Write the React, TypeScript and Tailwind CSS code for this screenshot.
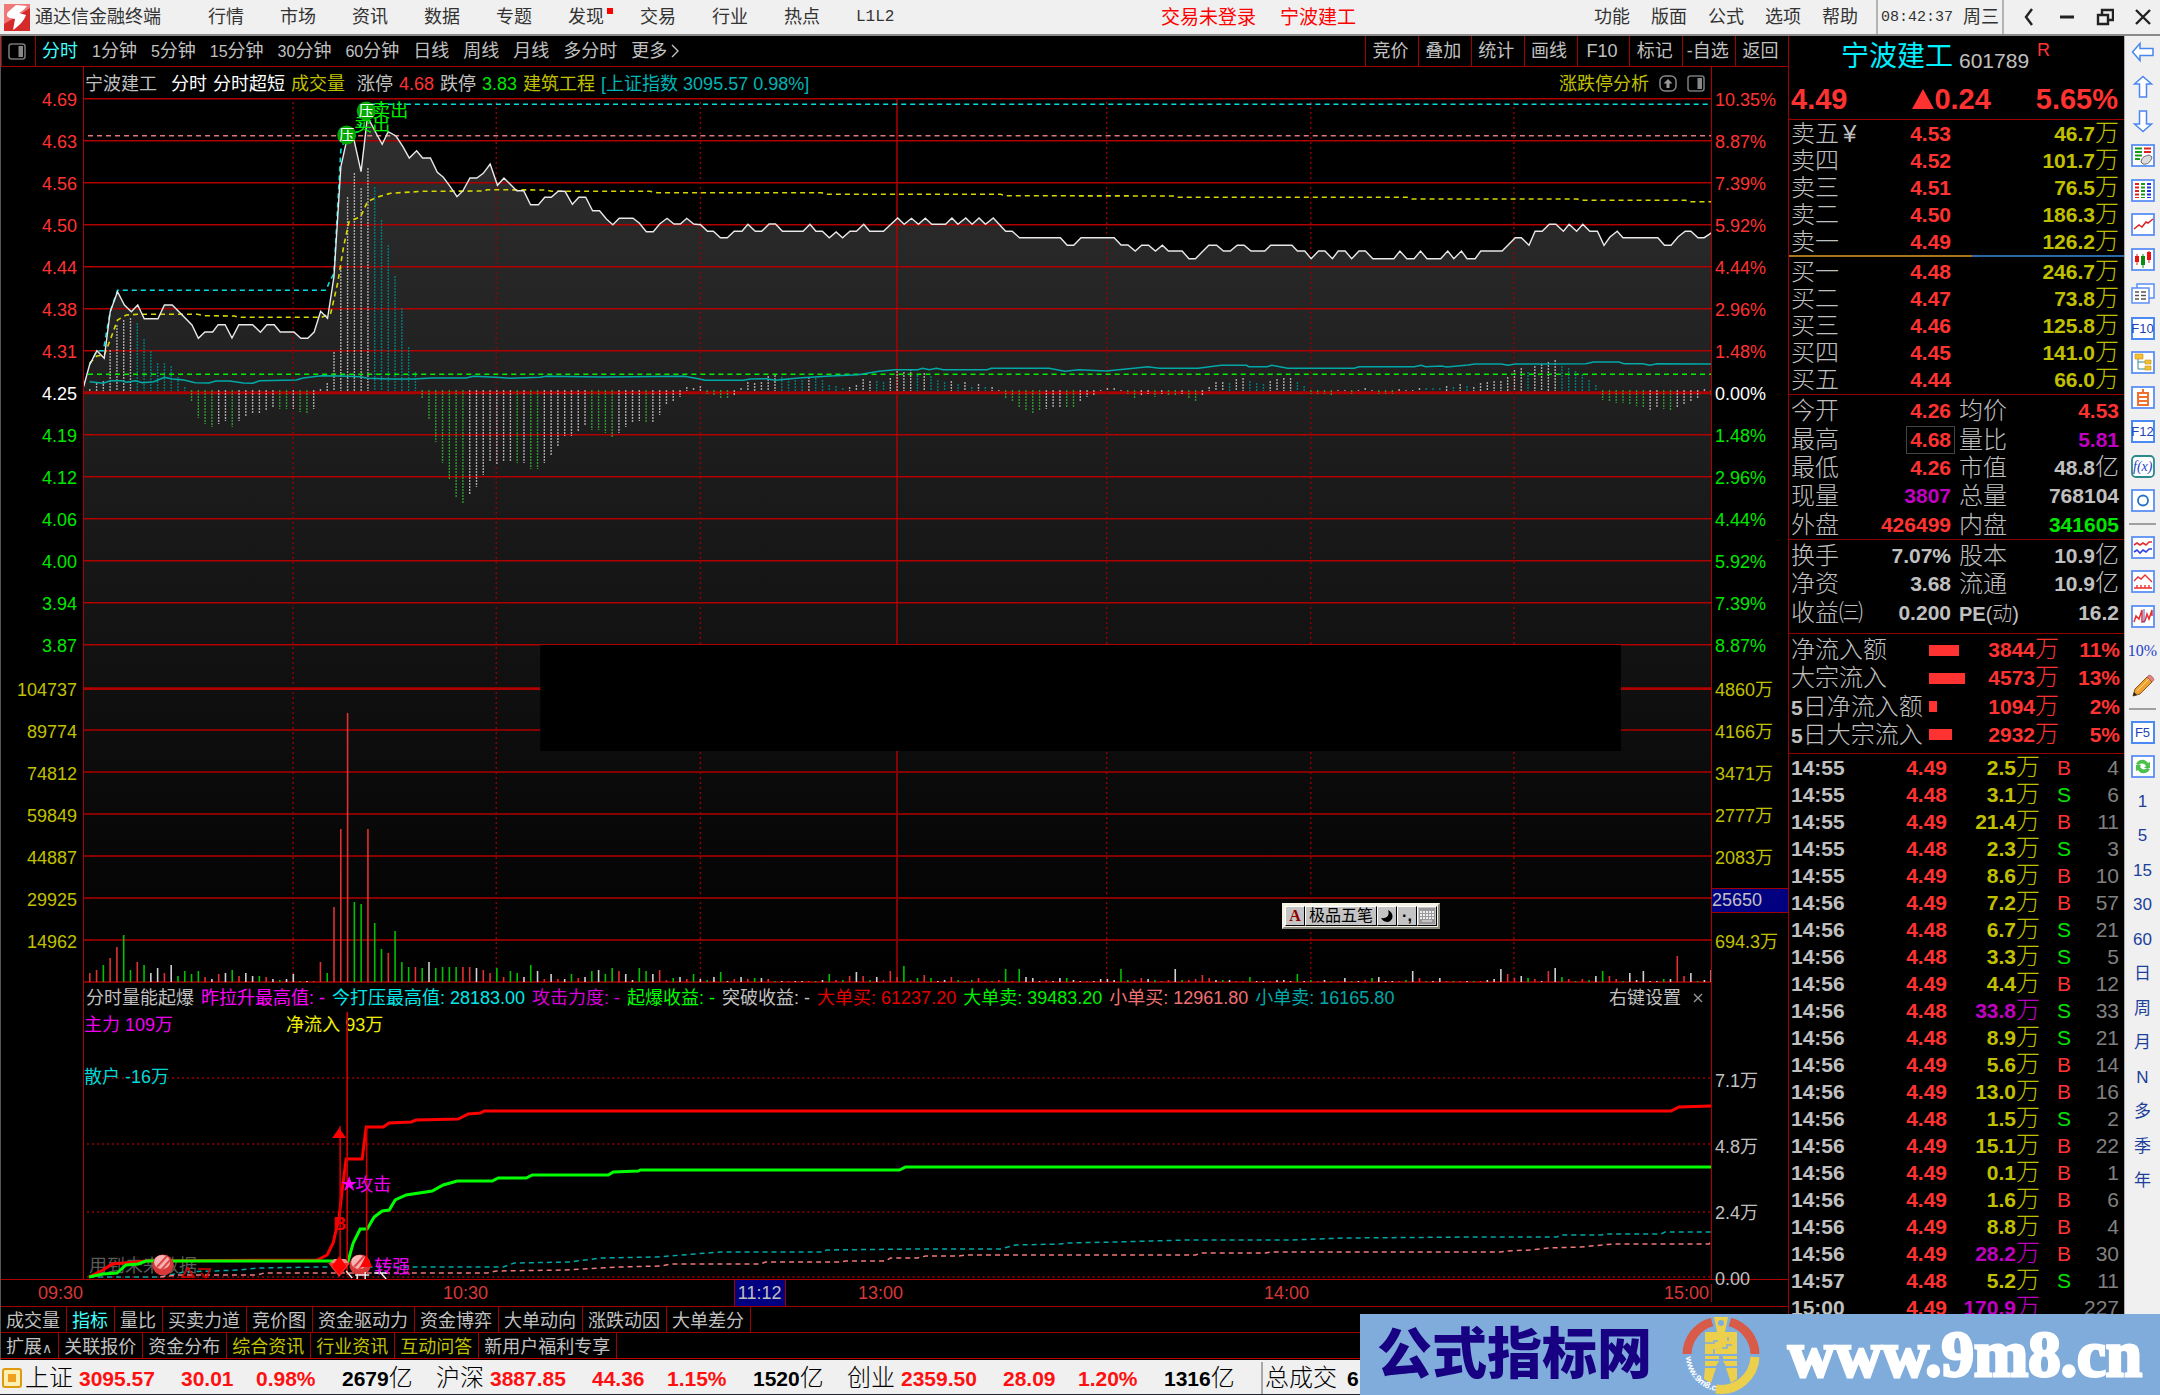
import React from "react";

const SANS = "font-['Liberation_Sans','Noto_Sans_CJK_SC',sans-serif]";

const RED = "text-[#ff3232]";
const GREEN = "text-[#00e600]";
const YELLOW = "text-[#c0c000]";
const GRAY = "text-[#c0c0c0]";
const PURPLE = "text-[#c000c0]";

/* ------------------------------------------------------------------ */
/* Chart data                                                          */
/* ------------------------------------------------------------------ */

type Block = { x: number; k: number; pts: string };

// Each block holds "x,y" samples relative to its own origin and density.
const toPoints = (blocks: Block[]) =>
  blocks
    .map(({ x, k, pts }) =>
      pts
        .trim()
        .split(/\s+/)
        .map((p) => {
          const [px, py] = p.split(",").map(Number);
          return `${(x + px / k).toFixed(1)},${(py / 3).toFixed(1)}`;
        })
        .join(" "),
    )
    .join(" ");

const A = 2.178;
const B = 2.119;

const PRICE = toPoints([
  {
    x: 0,
    k: A,
    pts: `182,1160 195,1095 211,1052 227,1075 240,935 256,875 271,915 286,935 300,915 314,956 344,956 358,915 375,915 418,975 432,1015 446,996 463,996 475,974 490,974 505,1014 520,974 550,974 567,997 581,974 597,974 610,996 640,996 655,1015 670,1015 684,996 698,934 713,955 727,830 742,500 755,420 770,415 786,515 800,350 815,390 832,433 845,395 862,408 877,440 891,474 907,452 920,474 937,474 952,517 965,532 980,560 995,590 1008,572 1023,534 1038,534 1052,520 1067,492 1083,556 1097,534 1125,572 1140,572 1155,614 1172,614 1186,592 1200,592 1215,574 1230,574 1246,613 1260,592 1275,592 1290,632 1305,632 1320,657 1334,674 1348,655 1378,655 1392,670 1407,695 1422,695 1436,672 1452,655 1467,672 1481,672 1495,655 1510,672 1525,674 1540,694 1553,694`,
  },
  {
    x: 720,
    k: A,
    pts: `0,713 15,713 30,694 47,694 60,673 76,694 90,694 106,672 120,672 135,694 180,694 195,673 208,694 222,694 237,713 252,696 266,713 282,694 296,694 312,673 325,694 355,694 370,674 386,654 400,673 416,655 431,673 446,655 460,673 490,673 504,654 517,673 534,654 548,673 563,654 577,673 594,654 621,694 635,694 651,713 740,713 755,736 769,736 785,713 857,713 872,735 887,735 903,753 917,736 932,736 947,753 962,736 975,753 1005,753 1020,776 1034,776 1063,736 1080,736 1095,753 1110,753 1125,736 1140,736 1155,753 1185,753 1198,736 1244,736 1256,753 1272,753 1286,776 1302,753 1316,753 1332,776 1345,753 1360,753 1374,776 1390,753 1404,753 1420,776 1466,776 1479,753 1494,776 1510,776 1524,753 1538,776`,
  },
  {
    x: 1420,
    k: B,
    pts: `42,776 57,753 70,776 86,753 98,776 115,776 127,753 172,753 200,713 213,713 229,736 242,694 257,694 272,673 286,673 302,694 314,673 330,694 343,673 358,694 374,694 388,736 400,712 416,694 428,713 502,713 516,736 530,736 545,710 560,694 572,694 587,713 600,713 617,697`,
  },
]);

const AVERAGE = toPoints([
  {
    x: 0,
    k: A,
    pts: `195,1090 211,1068 227,1065 240,1020 256,960 275,945 300,943 430,943 445,947 510,948 520,952 700,952 720,940 735,850 748,740 760,665 785,650 800,605 820,592 850,580 920,574 1055,573 1060,569 1190,570 1200,574 1415,574 1430,578`,
  },
  { x: 720, k: A, pts: `220,578 230,583 610,583 620,587 985,588 995,592 1495,592 1505,597` },
  { x: 1420, k: B, pts: `330,597 345,601 560,601 572,605 617,605` },
]);

const HIGHEST = toPoints([
  {
    x: 0,
    k: A,
    pts: `195,1095 211,1052 225,1052 240,935 256,871 710,871 716,850 727,820 742,450 755,404 780,395 800,313`,
  },
  { x: 1420, k: B, pts: `617,313` },
]);

const INDEX = toPoints([
  {
    x: 0,
    k: A,
    pts: `195,1145 225,1150 240,1142 265,1142 275,1147 295,1142 310,1148 335,1145 358,1132 375,1137 400,1140 425,1148 455,1149 470,1143 500,1143 530,1149 550,1150 565,1142 645,1140 660,1134 700,1127 740,1128 785,1130 800,1135 850,1137 900,1137 940,1134 1015,1134 1030,1129 1080,1132 1110,1135 1175,1132 1190,1129 1310,1131 1490,1129 1520,1136 1535,1141`,
  },
  {
    x: 720,
    k: A,
    pts: `50,1141 65,1137 100,1136 120,1141 170,1134 240,1128 300,1124 345,1114 380,1109 430,1109 440,1105 455,1109 470,1105 485,1109 580,1109 590,1105 715,1105 750,1114 780,1109 840,1113 900,1105 930,1100 955,1105 1040,1105 1090,1096 1145,1096 1150,1100 1190,1100 1200,1096 1235,1105 1380,1105 1390,1100 1510,1100 1525,1096 1535,1100`,
  },
  {
    x: 1420,
    k: B,
    pts: `44,1098 55,1101 100,1095 115,1092 170,1092 185,1096 200,1092 350,1091 365,1086 420,1086 430,1091 470,1091 485,1096 500,1091 617,1092`,
  },
]);

// One token per minute: signed length and colour key.
const MACD =
  "2w 8w 10w 41w 66w 71w 73w 68t 52t 40t 28t 28t 25t 14t 4t -8g -25g -31g -34g -31w -28w -34g -28w -24w -21w -21w -18w -14w -16g -16g -16w -19g -21g -16w 2w 8w 39w 124w 194w 218w 203w 223w 204t 171t 146t 115t 83t 44t 19t -5g -27g -49g -70g -87g -105g -111g -101w -94w -82w -69w -71w -69w -69w -70g -70w -76g -76g -70w -63w -53w -43w -43w -39w -33w -37g -37g -40g -45g -40w -34w -30w -28w -30g -30w -22w -12w -8w -4w 4w 3w 5w -1g -2g -5g -5g -2w 3w 9w 8w 9w 15w 16w 14t 13t 11t 11t 14w 13t 11t 6t 5t 3t 4w 6w 12w 10w 10t 9t 13w 20w 19w 22w 16t 18w 15t 11t 9t 10w 7t 9w 4t 7w 4t 4w 1w -5g -9g -14g -18g -20g -18g -16w -14w -14w -14g -14g -9w -4w -2w 1w 3w 3w 1w -1g -5g -2w -1w -4g -1w -3g -3g -1w -5g -8g -3w 4w 9w 9w 8t 12w 13w 10t 8t 7t 10w 12w 13w 13w 9t 5t -1g -1g -1g -3g 1w 1w -1g 1w 3w 1w -1g -1g -1g 2w 1w 1w 3w 3t 3t 3t 5w 4t 7w 5t 4w 8w 9w 10w 10w 14w 21w 23w 19t 25w 27w 29w 31w 25t 23t 20t 17t 11t 6t -7g -8g -10g -10g -12g -13g -14g -17w -15w -16g -17g -14w -12w -8w -5w 2w -3g";

const VOLUME =
  "9r 12r 17g 24r 35r 47g 12g 20r 17g 9w 14w 9r 17w 6g 11g 8g 11g 5r 3w 8r 9w 12g 6r 9w 6w 6g 5r 3w 2g 3w 8w 1g 1w 1r 20r 9g 75r 153r 269r 80g 78g 153r 59g 33g 29r 51g 20g 15g 15r 14g 20w 14g 15g 15g 15g 15r 15r 14w 12r 9r 14g 5r 11g 9g 5w 17g 11w 3r 8w 3r 3w 8g 4r 5w 11g 12w 8g 14g 11r 8w 2w 14g 11g 8w 12r 2r 4g 5w 3r 8g 3w 2g 5w 10g 1w 3r 5w 3r 4g 4w 3r 1g 1w 1r 1w 1w 1r 1g 2w 8g 2r 2g 6r 10w 6r 2g 5w 2r 11r 5r 16g 2r 4g 7r 4g 1w 2w 5r 2g 1g 2g 4r 1r 1g 2r 13g 1r 13g 5w 4w 1w 2r 1w 4w 4g 2w 1w 1r 1w 3w 3w 2w 13g 2g 2r 4r 3w 2g 1r 2r 13w 2g 2r 3r 7r 4r 2w 2g 2w 1r 1r 5g 1w 1w 1r 2w 2w 1w 8g 1w 2g 1r 2w 1g 1r 4w 1g 1w 2r 4g 5w 1w 1w 1r 2g 11w 4r 1g 1w 4w 1r 1g 1r 1w 1g 1r 2w 3w 13w 8r 4r 6w 4g 3r 1w 11r 14w 5g 3r 1g 3r 2g 6w 11g 6r 3r 1g 9w 2w 11w 1w 1w 3g 3w 26r 6r 9w 1g 2w 12w";

const parseBars = (s: string) =>
  s.split(" ").map((t, i) => ({
    x: 83 + 6.78 * (i + 1),
    h: parseInt(t, 10),
    c: t.slice(-1),
  }));

const MACD_COLORS: Record<string, string> = { w: "#a8a8a8", g: "#2f9a2f", t: "#007c7c" };
const VOL_COLORS: Record<string, string> = { w: "#d0d0d0", g: "#00c000", r: "#e03030" };

const V_GRID = [293, 496, 700, 1106, 1310, 1513];

/* ------------------------------------------------------------------ */
/* Small pieces                                                        */
/* ------------------------------------------------------------------ */

function Value({ text, unit, className }: { text: string; unit?: string; className: string }) {
  return (
    <span className={`block whitespace-nowrap text-[21px] font-bold leading-[26px] ${className}`}>
      {text}
      {unit && <span className="text-2xl font-light leading-none">{unit}</span>}
    </span>
  );
}

function SplitIcon({ className }: { className: string }) {
  return (
    <svg className={className} viewBox="0 0 18 17">
      <rect x="1" y="1" width="16" height="15" rx="2.5" fill="none" stroke="#777" strokeWidth="1.6" />
      <rect x="10.5" y="3" width="4.5" height="11" fill="#888" />
    </svg>
  );
}

/* ------------------------------------------------------------------ */
/* Top bar                                                             */
/* ------------------------------------------------------------------ */

const MENU = ["行情", "市场", "资讯", "数据", "专题", "发现", "交易", "行业", "热点"];
const RIGHT_MENU = ["功能", "版面", "公式", "选项", "帮助"];

function TopBar() {
  return (
    <header className="flex h-9 items-center border-b-2 border-[#8a8a8a] bg-[#f0f0f0] text-lg leading-none text-[#333]">
      <svg className="ml-1 h-[27px] w-[26px]" viewBox="0 0 26 27">
        <rect width="26" height="27" fill="#d42a2a" />
        <path d="M0 0h26v4L10 14 0 20z" fill="#f07878" />
        <path d="M12 1 4 8c-2 3-1 5 2 6l5 1-2 11c6-4 11-9 13-15l-7-2c3-2 6-4 8-7z" fill="#fff" />
      </svg>
      <h1 className="ml-[5px] w-[173px] text-lg">通达信金融终端</h1>
      <nav className="flex gap-9">
        {MENU.map((m) => (
          <button key={m} className="relative">
            {m}
            {m === "发现" && <span className="absolute -right-[9px] top-0 h-1.5 w-1.5 bg-[#ff0000]" />}
          </button>
        ))}
        <button className="font-['Liberation_Mono',monospace] text-base leading-none">L1L2</button>
      </nav>
      <div className="flex flex-1 justify-end gap-6 pr-[238px] text-[19px] text-[#ff0000]">
        <button>交易未登录</button>
        <button>宁波建工</button>
      </div>
      <nav className="flex gap-[21px]">
        {RIGHT_MENU.map((m) => (
          <button key={m}>{m}</button>
        ))}
      </nav>
      <div className="ml-[18px] flex h-full items-center gap-2.5 border-x-2 border-[#b4b4b4] px-[3px]">
        <time className="font-['Liberation_Mono',monospace] text-[15px]">08:42:37</time>
        <span>周三</span>
      </div>
      <div className="ml-4 flex items-center gap-5 pr-2">
        <button aria-label="后退">
          <svg className="h-5 w-[18px]" viewBox="0 0 18 20">
            <path d="M12 2 6 10l6 8" fill="none" stroke="#222" strokeWidth="2.4" />
          </svg>
        </button>
        <button aria-label="最小化">
          <svg className="h-5 w-[18px]" viewBox="0 0 18 20">
            <path d="M2 10h14" stroke="#222" strokeWidth="3" />
          </svg>
        </button>
        <button aria-label="还原">
          <svg className="h-5 w-[18px]" viewBox="0 0 18 20" fill="none" stroke="#222" strokeWidth="2.4">
            <path d="M2 8h10v9H2zM6 7V3h11v10h-4" />
          </svg>
        </button>
        <button aria-label="关闭">
          <svg className="h-5 w-[18px]" viewBox="0 0 18 20">
            <path d="m2 3 14 14M16 3 2 17" stroke="#222" strokeWidth="2.4" />
          </svg>
        </button>
      </div>
    </header>
  );
}

/* ------------------------------------------------------------------ */
/* Period toolbar                                                      */
/* ------------------------------------------------------------------ */

const PERIODS: [string, string][] = [
  ["", "分时"],
  ["1", "分钟"],
  ["5", "分钟"],
  ["15", "分钟"],
  ["30", "分钟"],
  ["60", "分钟"],
  ["", "日线"],
  ["", "周线"],
  ["", "月线"],
  ["", "多分时"],
];
const TOOLS = ["竞价", "叠加", "统计", "画线", "F10", "标记", "-自选", "返回"];

function PeriodBar() {
  return (
    <div className={`flex h-[31px] items-stretch border-b border-[#a00000] text-lg leading-none ${GRAY}`}>
      <button aria-label="侧栏" className="flex w-[35px] items-center justify-center border-x border-[#a00000] pr-1">
        <SplitIcon className="h-[17px] w-[18px]" />
      </button>
      <div className="flex items-center gap-3.5 pl-1.5">
        {PERIODS.map(([n, label], i) => (
          <button key={n + label} className={i === 0 ? "text-[#40ffff]" : ""}>
            <span className="text-base leading-none">{n}</span>
            {label}
          </button>
        ))}
        <button className="flex items-center gap-1">
          更多
          <svg className="h-4 w-2" viewBox="0 0 8 16">
            <path d="m1 2 6 6-6 6" fill="none" stroke="#c0c0c0" strokeWidth="1.4" />
          </svg>
        </button>
      </div>
      <div className="ml-auto grid w-[423px] grid-cols-8">
        {TOOLS.map((t) => (
          <button key={t} className="whitespace-nowrap border-l border-[#a00000] pr-[3px]">
            {t}
          </button>
        ))}
      </div>
    </div>
  );
}

/* ------------------------------------------------------------------ */
/* Price and volume chart                                              */
/* ------------------------------------------------------------------ */

const UP = ["4.69", "4.63", "4.56", "4.50", "4.44", "4.38", "4.31"];
const DOWN = ["4.19", "4.12", "4.06", "4.00", "3.94", "3.87"];
const UP_PCT = ["10.35%", "8.87%", "7.39%", "5.92%", "4.44%", "2.96%", "1.48%"];
const DOWN_PCT = ["1.48%", "2.96%", "4.44%", "5.92%", "7.39%", "8.87%"];
const VOLS = ["104737", "89774", "74812", "59849", "44887", "29925", "14962"];
const AMOUNTS = ["4860万", "4166万", "3471万", "2777万", "2083万", "", "694.3万"];

function AxisCells({ items, color }: { items: string[]; color: string }) {
  return (
    <>
      {items.map((t, i) => (
        <div key={i} className={`flex h-[42px] items-center ${color}`}>
          {t}
        </div>
      ))}
    </>
  );
}

function PriceSvg() {
  const macd = parseBars(MACD);
  const volume = parseBars(VOLUME);
  return (
    <svg className="block h-[885px] w-full" viewBox="84 98 1626 885" preserveAspectRatio="none">
      <defs>
        <linearGradient id="area" gradientUnits="userSpaceOnUse" x1="0" y1="110" x2="0" y2="983">
          <stop offset="0" stopColor="#2f2f2f" />
          <stop offset="1" stopColor="#000" />
        </linearGradient>
      </defs>
      <polygon points={`${PRICE} 1711,983 83,983`} fill="url(#area)" />
      <g stroke="#b00000" strokeWidth="1.5">
        {Array.from({ length: 14 }, (_, i) => (
          <line key={i} x1="83" x2="1711" y1={98.8 + 42 * i} y2={98.8 + 42 * i} strokeWidth={i === 7 ? 3 : 1.5} />
        ))}
        <line x1="83" x2="1711" y1="688.6" y2="688.6" strokeWidth="2.6" />
        <line x1="896.5" x2="896.5" y1="98" y2="982" />
        <line x1="83" x2="1711" y1="982" y2="982" />
      </g>
      <g stroke="#860000" strokeWidth="2">
        {Array.from({ length: 6 }, (_, i) => (
          <line key={i} x1="83" x2="1711" y1={730 + 42 * i} y2={730 + 42 * i} />
        ))}
      </g>
      <g stroke="#960000" strokeWidth="1.4" strokeDasharray="2 3">
        {V_GRID.map((x) => (
          <line key={x} x1={x} x2={x} y1="102" y2="982" />
        ))}
      </g>
      <g strokeWidth="1.4" strokeDasharray="2 1">
        {macd.map((b) => (
          <line
            key={b.x}
            x1={b.x}
            x2={b.x}
            y1={b.h > 0 ? 391 - b.h : 390}
            y2={b.h > 0 ? 391 : 393 - b.h}
            stroke={MACD_COLORS[b.c]}
          />
        ))}
      </g>
      <g strokeWidth="1.6">
        {volume.map((b) => (
          <line key={b.x} x1={b.x} x2={b.x} y1={982 - b.h} y2="982" stroke={VOL_COLORS[b.c]} />
        ))}
      </g>
      <g fill="none" strokeWidth="1.6">
        <line x1="88" x2="1711" y1="135.7" y2="135.7" stroke="#e07878" strokeDasharray="5 4" />
        <polyline points={HIGHEST} stroke="#00e0e0" strokeDasharray="5 4" />
        <polyline points={AVERAGE} stroke="#d8d800" strokeDasharray="5 4" />
        <line x1="88" x2="1711" y1="374.3" y2="374.3" stroke="#00f000" strokeDasharray="5 4" />
        <polyline points={INDEX} stroke="#00a8a8" />
        <polyline points={PRICE} stroke="#e8e8e8" strokeWidth="1.4" />
      </g>
      <g className={SANS} fontSize="18">
        <g fill="#00f000">
          <text x="354" y="131">卖出</text>
          <text x="372" y="117">卖出</text>
        </g>
        <circle cx="346.5" cy="135" r="9.5" fill="#00a800" />
        <circle cx="366" cy="111" r="9.5" fill="#00a800" />
        <g fill="#fff" fontSize="15">
          <text x="339" y="140">压</text>
          <text x="358.5" y="116">压</text>
        </g>
      </g>
      <rect x="540" y="645" width="1080" height="106" fill="#000" />
    </svg>
  );
}

function PriceSection() {
  return (
    <section className="flex text-lg leading-none">
      <div className="flex w-[82px] flex-col items-end pr-1.5 pt-3">
        <AxisCells items={UP} color={RED} />
        <AxisCells items={["4.25"]} color="text-white" />
        <AxisCells items={DOWN} color={GREEN} />
        <div className="mt-0.5">
          <AxisCells items={VOLS} color={`${YELLOW} justify-end`} />
        </div>
      </div>
      <div className="min-w-0 flex-1 border-x border-[#b00000]">
        <div className={`flex h-[31px] items-center gap-1.5 whitespace-nowrap pl-px pt-0.5 ${GRAY}`}>
          <span>宁波建工</span>
          <span className="ml-2 text-white">分时</span>
          <span className="text-white">分时超短</span>
          <span className={YELLOW}>成交量</span>
          <span className="ml-1.5">涨停</span>
          <span className={RED}>4.68</span>
          <span>跌停</span>
          <span className={GREEN}>3.83</span>
          <span className={YELLOW}>建筑工程</span>
          <span className="text-[#00b4b4]">[上证指数 3095.57 0.98%]</span>
          <div className="ml-auto flex items-center gap-2.5 pr-1.5">
            <button className={YELLOW}>涨跌停分析</button>
            <button aria-label="上移">
              <svg className="h-[17px] w-[18px]" viewBox="0 0 18 17">
                <rect x="1" y="1" width="16" height="15" rx="5" fill="none" stroke="#888" strokeWidth="1.5" />
                <path d="M9 4 4.500 8.500H7.500V13h3V8.500h3z" fill="#999" />
              </svg>
            </button>
            <button aria-label="分栏">
              <SplitIcon className="h-[17px] w-[18px]" />
            </button>
          </div>
        </div>
        <PriceSvg />
      </div>
      <div className="w-[76px] pt-3">
        <div className="pl-[3px]">
          <AxisCells items={UP_PCT} color={RED} />
          <AxisCells items={["0.00%"]} color="text-white" />
          <AxisCells items={DOWN_PCT} color={GREEN} />
        </div>
        <div className="mt-0.5">
          {AMOUNTS.map((a, i) =>
            a ? (
              <div key={i} className={`flex h-[42px] items-center pl-[3px] ${YELLOW}`}>
                {a}
              </div>
            ) : (
              <div key={i} className="flex h-[42px] items-center">
                <span className={`flex h-[25px] w-full items-center border-y border-[#a00000] bg-[#000080] ${GRAY}`}>
                  25650
                </span>
              </div>
            ),
          )}
        </div>
      </div>
    </section>
  );
}

/* ------------------------------------------------------------------ */
/* Indicator chart                                                     */
/* ------------------------------------------------------------------ */

const IND: [string, string][] = [
  ["分时量能起爆", "text-[#c0c0c0]"],
  ["昨拉升最高值: -", "text-[#ff00ff]"],
  ["今打压最高值: 28183.00", "text-[#00e8e8]"],
  ["攻击力度: -", "text-[#d800d8]"],
  ["起爆收益: -", "text-[#00ff00]"],
  ["突破收益: -", "text-[#c0c0c0]"],
  ["大单买: 61237.20", "text-[#e00000]"],
  ["大单卖: 39483.20", "text-[#00f000]"],
  ["小单买: 12961.80", "text-[#f07070]"],
  ["小单卖: 16165.80", "text-[#00a8a8]"],
];

function Balloon({ cx }: { cx: number }) {
  return (
    <g>
      <ellipse cx={cx} cy="1265" rx="10.500" ry="10.500" fill="#d83838" />
      <ellipse cx={cx - 1} cy="1262" rx="8" ry="7" fill="#f6b4b4" />
      <path
        d={`M${cx - 6} 1267 L${cx + 4} 1256 M${cx - 2} 1270 L${cx + 7} 1260`}
        stroke="#e04848"
        strokeWidth="2"
      />
    </g>
  );
}

function IndicatorSvg() {
  return (
    <svg className="block h-[269px] w-full" viewBox="84 1010 1626 269" preserveAspectRatio="none">
      <g stroke="#960000" strokeWidth="1.400" strokeDasharray="2 3">
        {[1078, 1144, 1212, 1277].map((y) => (
          <line key={y} x1="87" x2="1711" y1={y} y2={y} />
        ))}
      </g>
      <g className={SANS} fontSize="18">
        <text x="84" y="1031" fill="#f000f0">主力 109万</text>
        <text x="286" y="1031" fill="#f0f000">净流入 93万</text>
        <text x="84" y="1083" fill="#00d8d8">散户 -16万</text>
        <text x="89" y="1272" fill="#5a5a5a">用到未来数据</text>
      </g>
      <g fill="none" strokeWidth="1.500" strokeDasharray="5 4">
        <polyline
          stroke="#00a8a8"
          points="89,1277 160,1277 184,1272 239,1270 257,1268 321,1267 503,1267 514,1263 569,1262 601,1258 657,1257 707,1253 720,1252 823,1252 826,1250 914,1249 1000,1249 1015,1245 1060,1244 1066,1243 1115,1242 1187,1240 1290,1240 1345,1238 1475,1237 1556,1237 1560,1235 1600,1235 1604,1234 1660,1234 1664,1232 1711,1232"
        />
        <polyline
          stroke="#f07878"
          points="160,1277 179,1275 257,1275 264,1273 487,1273 496,1271 565,1270 618,1267 661,1266 670,1264 760,1264 765,1262 840,1262 845,1261 885,1261 890,1258 917,1258 925,1256 958,1256 965,1255 1195,1255 1200,1253 1265,1253 1270,1252 1500,1252 1505,1251 1530,1250 1547,1248 1580,1247 1612,1244 1708,1244 1711,1241"
        />
      </g>
      <g fill="none" strokeWidth="3">
        <polyline
          stroke="#ff0000"
          points="89,1277 103,1270 112,1264 124,1263 146,1261 317,1260 327,1255 333,1243 339,1217 342,1190 346,1159 362,1159 366,1127 383,1127 389,1123 411,1122 416,1120 458,1119 468,1114 480,1113 484,1111 1670,1111 1678,1107 1711,1106"
        />
        <polyline
          stroke="#00ff00"
          points="89,1277 103,1274 117,1273 126,1265 138,1264 146,1261 348,1261 353,1243 360,1229 367,1229 374,1217 382,1211 389,1210 395,1200 406,1195 432,1191 443,1185 457,1181 492,1181 498,1178 526,1178 532,1175 608,1175 613,1172 638,1171 640,1170 899,1170 905,1167 1711,1167"
        />
      </g>
      <g stroke="#d00000" strokeWidth="1.600">
        <line x1="347" x2="347" y1="1012" y2="1275" />
        <line x1="340" x2="340" y1="1126" y2="1275" />
        <line x1="366.500" x2="366.500" y1="1127" y2="1262" />
      </g>
      <path d="m339 1128-7 10h14z" fill="#ff0000" />
      <path d="M328 1263h22l-11 14z" fill="#f03030" />
      <path d="m330 1263 4-4h11l4 4z" fill="#e88" />
      <Balloon cx={163} />
      <Balloon cx={360} />
      <path d="m339 1256-7 10 7 9 7-9zM366 1255l-6 12h12z" fill="#ff0000" />
      <path
        d="m188 1268-6 9h12zM198 1269h12l-4 9M201 1273l5 5"
        fill="none"
        stroke="#e00000"
        strokeWidth="1.600"
      />
      <path d="m346 1271 6 7M355 1275h14M357 1275v4M365 1272v7M374 1273h13M378 1270l8 9" stroke="#f0f0f0" strokeWidth="1.500" fill="none" />
      <g className={SANS} fontSize="18">
        <text x="333" y="1230" fill="#f00000" fontWeight="bold">B</text>
        <path d="m349 1176 2 6h6l-5 3 2 6-5-4-5 4 2-6-5-3h6z" fill="#ff00ff" />
        <text x="355" y="1191" fill="#f000f0">攻击</text>
        <text x="374" y="1273" fill="#f000f0">转强</text>
      </g>
    </svg>
  );
}

function IndicatorSection() {
  return (
    <section className="flex text-lg leading-none">
      <div className="w-[82px]" />
      <div className="min-w-0 flex-1 border-x border-[#b00000]">
        <div className="flex h-[27px] items-center gap-[7px] whitespace-nowrap pl-0.5 pt-0.5">
          {IND.map(([t, c]) => (
            <span key={t} className={c}>
              {t}
            </span>
          ))}
          <button className={`ml-auto ${GRAY}`}>右键设置</button>
          <button aria-label="关闭指标" className="pl-1 pr-[7px]">
            <svg className="h-3 w-3" viewBox="0 0 12 12">
              <path d="m2 2 8 8M10 2l-8 8" stroke="#999" strokeWidth="1.300" />
            </svg>
          </button>
        </div>
        <IndicatorSvg />
      </div>
      <div className={`relative z-10 -mb-9 w-[76px] pl-[3px] pt-[65px] ${GRAY}`}>
        {["7.1万", "4.8万", "2.4万", "0.00"].map((t) => (
          <div key={t} className="flex h-[66px] items-center">
            {t}
          </div>
        ))}
      </div>
    </section>
  );
}

function TimeAxis() {
  return (
    <div className="relative flex h-[27px] items-center border-t border-[#b00000] text-lg leading-none text-[#d83838]">
      <span className="w-[82px] text-right">09:30</span>
      <div className="grid flex-1 grid-cols-[405fr_415fr_406fr_402fr] border-r border-[#b00000] text-right">
        <span>10:30</span>
        <span>13:00</span>
        <span>14:00</span>
        <span className="pr-0.5">15:00</span>
      </div>
      <span className="w-[76px]" />
      <span className={`absolute inset-y-0 left-[41%] flex w-[52px] items-center justify-center border-x border-[#a00000] bg-[#000080] ${GRAY}`}>
        11:12
      </span>
    </div>
  );
}

const TABS1 = ["成交量", "指标", "量比", "买卖力道", "竞价图", "资金驱动力", "资金博弈", "大单动向", "涨跌动因", "大单差分"];
const TABS2 = ["扩展", "关联报价", "资金分布", "综合资讯", "行业资讯", "互动问答", "新用户福利专享"];

function TabRow({ tabs, colors }: { tabs: string[]; colors: Record<string, string> }) {
  return (
    <div className="flex h-[26px] border-t border-[#a00000] text-lg leading-none">
      {tabs.map((t) => (
        <button key={t} className={`whitespace-nowrap border-r border-[#a00000] pl-[5px] pr-1.5 pt-0.5 ${colors[t] ?? GRAY}`}>
          {t}
          {t === "扩展" && (
            <span aria-hidden="true" className="font-['DejaVu_Sans',sans-serif] text-sm leading-none">
              ∧
            </span>
          )}
        </button>
      ))}
    </div>
  );
}

/* ------------------------------------------------------------------ */
/* Quote panel                                                         */
/* ------------------------------------------------------------------ */

const SELL = [
  ["卖五", "4.53", "46.7"],
  ["卖四", "4.52", "101.7"],
  ["卖三", "4.51", "76.5"],
  ["卖二", "4.50", "186.3"],
  ["卖一", "4.49", "126.2"],
];
const BUY = [
  ["买一", "4.48", "246.7"],
  ["买二", "4.47", "73.8"],
  ["买三", "4.46", "125.8"],
  ["买四", "4.45", "141.0"],
  ["买五", "4.44", "66.0"],
];

function Book({ rows, yuan }: { rows: string[][]; yuan?: boolean }) {
  return (
    <table className="w-full table-fixed">
      <colgroup>
        <col className="w-[82px]" />
        <col className="w-[80px]" />
        <col />
      </colgroup>
      <tbody>
        {rows.map(([label, price, vol], i) => (
          <tr key={label} className="h-[27px]">
            <th scope="row" className={`whitespace-nowrap p-0 pl-0.5 text-left text-2xl font-light leading-[26px] ${GRAY}`}>
              {label}
              {yuan && i === 0 && <span className="pl-1 leading-none">¥</span>}
            </th>
            <td className="p-0 text-right">
              <Value text={price} className={RED} />
            </td>
            <td className="p-0 pr-[5px] text-right">
              <Value text={vol} unit="万" className={YELLOW} />
            </td>
          </tr>
        ))}
      </tbody>
    </table>
  );
}

type Stat = [string, string, string, string, string, string, string];
const STATS1: Stat[] = [
  ["今开", "4.26", RED, "均价", "4.53", "", RED],
  ["最高", "4.68", RED, "量比", "5.81", "", PURPLE],
  ["最低", "4.26", RED, "市值", "48.8", "亿", GRAY],
  ["现量", "3807", PURPLE, "总量", "768104", "", GRAY],
  ["外盘", "426499", RED, "内盘", "341605", "", GREEN],
];
const STATS2: Stat[] = [
  ["换手", "7.07%", GRAY, "股本", "10.9", "亿", GRAY],
  ["净资", "3.68", GRAY, "流通", "10.9", "亿", GRAY],
  ["收益㈢", "0.200", GRAY, "PE(动)", "16.2", "", GRAY],
];

function Stats({ rows }: { rows: Stat[] }) {
  return (
    <>
      {rows.map(([l1, v1, c1, l2, v2, u2, c2]) => (
        <div key={l1} className="flex flex-1 items-center">
          <span className={`w-[75px] whitespace-nowrap pl-0.5 text-2xl font-light leading-[26px] ${GRAY}`}>{l1}</span>
          <span className="flex w-[91px] justify-end">
            <span className={v1 === "4.68" ? "-my-px border border-[#444] px-[3px]" : "px-1"}>
              <Value text={v1} className={c1} />
            </span>
          </span>
          <span className={`whitespace-nowrap pl-1 text-2xl font-light leading-[26px] ${GRAY}`}>
            {l2 === "PE(动)" ? (
              <>
                <span className="text-xl font-bold leading-none">PE</span>
                <span className="text-xl leading-none">(动)</span>
              </>
            ) : (
              l2
            )}
          </span>
          <span className="flex-1 pr-[5px] text-right">
            <Value text={v2} unit={u2} className={c2} />
          </span>
        </div>
      ))}
    </>
  );
}

const FLOWS: [string, string, number, string, string][] = [
  ["", "净流入额", 30, "3844", "11%"],
  ["", "大宗流入", 36, "4573", "13%"],
  ["5", "日净流入额", 8, "1094", "2%"],
  ["5", "日大宗流入", 23, "2932", "5%"],
];

const TICKS: [string, string, string, string, string][] = [
  ["14:55", "4.49", "2.5", "B", "4"],
  ["14:55", "4.48", "3.1", "S", "6"],
  ["14:55", "4.49", "21.4", "B", "11"],
  ["14:55", "4.48", "2.3", "S", "3"],
  ["14:55", "4.49", "8.6", "B", "10"],
  ["14:56", "4.49", "7.2", "B", "57"],
  ["14:56", "4.48", "6.7", "S", "21"],
  ["14:56", "4.48", "3.3", "S", "5"],
  ["14:56", "4.49", "4.4", "B", "12"],
  ["14:56", "4.48", "33.8", "S", "33"],
  ["14:56", "4.48", "8.9", "S", "21"],
  ["14:56", "4.49", "5.6", "B", "14"],
  ["14:56", "4.49", "13.0", "B", "16"],
  ["14:56", "4.48", "1.5", "S", "2"],
  ["14:56", "4.49", "15.1", "B", "22"],
  ["14:56", "4.49", "0.1", "B", "1"],
  ["14:56", "4.49", "1.6", "B", "6"],
  ["14:56", "4.49", "8.8", "B", "4"],
  ["14:56", "4.49", "28.2", "B", "30"],
  ["14:57", "4.48", "5.2", "S", "11"],
  ["15:00", "4.49", "170.9", "", "227"],
];

function QuotePanel() {
  return (
    <aside className="w-[336px] shrink-0 border-l border-[#a00000]">
      <div className="h-[84px] border-b border-[#a00000]">
        <div className="flex h-[42px] items-center gap-1.5 pl-[52px]">
          <h2 className="text-[28px] leading-none text-[#00f0ff]">宁波建工</h2>
          <span className={`pt-1.5 text-[21px] leading-none ${GRAY}`}>601789</span>
          <span className={`self-start pl-0.5 pt-[5px] text-lg leading-none ${RED}`}>R</span>
        </div>
        <div className={`flex h-[42px] items-center justify-between pl-0.5 pr-1.5 text-[29px] font-bold leading-none ${RED}`}>
          <span>4.49</span>
          <span className="flex items-center pl-5">
            <svg className="h-5 w-[22px]" viewBox="0 0 22 20">
              <path d="M11 0 22 20H0z" fill="#ff3232" />
            </svg>
            0.24
          </span>
          <span>5.65%</span>
        </div>
      </div>
      <Book rows={SELL} yuan />
      <div className="flex h-0.5">
        <span className="w-[183px] bg-[#a8741c]" />
        <span className="flex-1 bg-[#2a6aa8]" />
      </div>
      <div className="h-[138px] border-b border-[#900000] pt-px">
        <Book rows={BUY} />
      </div>
      <div className="flex h-[145px] flex-col border-b border-[#900000] pt-0.5">
        <Stats rows={STATS1} />
      </div>
      <div className="flex h-[94px] flex-col border-b border-[#900000] pb-1.5 pt-0.5">
        <Stats rows={STATS2} />
      </div>
      <div className="flex h-[120px] flex-col border-b border-[#900000] pb-1 pt-0.5">
        {FLOWS.map(([n, label, bar, v, pct]) => (
          <div key={label} className="flex flex-1 items-center">
            <span className={`w-[140px] whitespace-nowrap pl-0.5 text-2xl font-light leading-[26px] ${GRAY}`}>
              <span className="text-[21px] font-bold leading-none">{n}</span>
              {label}
            </span>
            <span className="h-[11px] bg-[#ff3232]" style={{ width: bar }} />
            <span className="flex-1 text-right">
              <Value text={v} unit="万" className={RED} />
            </span>
            <span className="w-[65px] pr-1 text-right">
              <Value text={pct} className={RED} />
            </span>
          </div>
        ))}
      </div>
      <table className="w-full table-fixed">
        <colgroup>
          <col className="w-[78px]" />
          <col className="w-[80px]" />
          <col className="w-[93px]" />
          <col className="w-[31px]" />
          <col />
        </colgroup>
        <tbody>
          {TICKS.map(([time, price, vol, side, n], i) => (
            <tr key={i} className="h-[27px]">
              <td className="p-0 pl-0.5">
                <Value text={time} className={GRAY} />
              </td>
              <td className="p-0 text-right">
                <Value text={price} className={RED} />
              </td>
              <td className="p-0 text-right">
                <Value text={vol} unit="万" className={parseFloat(vol) > 28 ? PURPLE : YELLOW} />
              </td>
              <td className="p-0 text-right">
                <span className={`block text-[21px] leading-[26px] ${side === "B" ? RED : GREEN}`}>{side}</span>
              </td>
              <td className="p-0 pr-[5px] text-right">
                <span className="block text-[21px] leading-[26px] text-[#808080]">{n}</span>
              </td>
            </tr>
          ))}
        </tbody>
      </table>
    </aside>
  );
}

/* ------------------------------------------------------------------ */
/* Icon sidebar                                                        */
/* ------------------------------------------------------------------ */

function Box({ children, stroke = "#5b8ff5" }: { children?: React.ReactNode; stroke?: string }) {
  return (
    <svg className="h-[23px] w-6" viewBox="0 0 24 23">
      <rect x="1" y="1" width="22" height="21" fill="#fff" stroke={stroke} strokeWidth="1.800" />
      {children}
    </svg>
  );
}

function Arrow({ angle }: { angle: number }) {
  return (
    <svg className="h-6 w-6" viewBox="0 0 24 24">
      <path
        d="M1.500 12 9 3.500V8.500H22v7H9v5z"
        transform={`rotate(${angle} 12 12)`}
        fill="#fff"
        stroke="#4a86f0"
        strokeWidth="1.500"
      />
    </svg>
  );
}

function BoxLabel({ t }: { t: string }) {
  return (
    <span className="flex h-[23px] w-6 items-center justify-center border-2 border-[#4a8af5] bg-white text-[13px] leading-none text-[#1c44b8]">
      {t}
    </span>
  );
}

const ICONS_A: [string, React.ReactNode][] = [
  ["左", <Arrow angle={0} />],
  ["上", <Arrow angle={90} />],
  ["下", <Arrow angle={-90} />],
  [
    "报价",
    <Box>
      <path d="M4 4.500h7M4 8h7M4 11.500h7M4 15h5" stroke="#1a9a1a" strokeWidth="2" />
      <path d="M13 4.500h7M13 8h7" stroke="#e02020" strokeWidth="2" />
      <path d="M10 18c1-6 5-6 8-7l3 2c-1 5-5 8-9 7z" fill="#ddd" stroke="#666" />
    </Box>,
  ],
  [
    "列表",
    <Box>
      <g strokeWidth="4" strokeDasharray="2 1.500" fill="none">
        <path d="M6 4v15" stroke="#e02020" />
        <path d="M12 4v15" stroke="#1a9a1a" />
        <path d="M18 4v15" stroke="#2030e0" />
      </g>
    </Box>,
  ],
  [
    "走势",
    <Box>
      <path d="m3 16 5-4 3 2 4-5 2 1 5-4" fill="none" stroke="#e02020" strokeWidth="1.500" />
    </Box>,
  ],
  [
    "K线",
    <Box>
      <path d="M6 6v11M18 3v12" stroke="#e02020" />
      <path d="M12 6v14" stroke="#108a10" />
      <path d="M4 8h4v6H4zM16 4h4v8h-4z" fill="#f01010" />
      <path d="M10 8h4v9h-4z" fill="#108a10" />
    </Box>,
  ],
  [
    "多窗",
    <svg className="h-[23px] w-6" viewBox="0 0 24 23" fill="#fff" stroke="#5b8ff5" strokeWidth="1.500">
      <path d="M6 2h17v14H6z" />
      <path d="M1 6h17v15H1z" />
      <path d="M4 10h4M10 10h5M4 13.500h4M10 13.500h5M4 17h4M10 17h5" stroke="#555" />
    </svg>,
  ],
  ["F10", <BoxLabel t="F10" />],
  [
    "树",
    <Box>
      <path d="M7 6v12h8M7 11h8" stroke="#3a8a8a" fill="none" />
      <path d="M4 3h8v5H4zM14 9h6v4h-6zM14 15h6v4h-6z" fill="#f5c030" stroke="#c89010" strokeWidth=".6" />
    </Box>,
  ],
  [
    "自选",
    <Box>
      <path d="M7 7h10v12H7zM7 11h10M7 15h10M12 3v4" fill="none" stroke="#f07030" strokeWidth="2" />
    </Box>,
  ],
  ["F12", <BoxLabel t="F12" />],
  [
    "公式",
    <svg className="h-[23px] w-6" viewBox="0 0 24 23">
      <rect x="1" y="1" width="22" height="21" rx="4" fill="#fff" stroke="#2a8a8a" strokeWidth="1.800" />
      <text x="2" y="16" fontSize="14" fontStyle="italic" fontFamily="Liberation Serif" fill="#1c44c8">
        f(x)
      </text>
    </svg>,
  ],
  [
    "圆",
    <Box>
      <circle cx="12" cy="11.500" r="5" fill="none" stroke="#2a70c8" strokeWidth="1.800" />
    </Box>,
  ],
];

const ICONS_B: [string, React.ReactNode][] = [
  [
    "波动",
    <Box>
      <path d="m3 9 3-2 3 2 3-2 3 2 3-3 3 0" fill="none" stroke="#e03030" strokeWidth="1.600" />
      <path d="m3 16 3-2 3 3 3-3 3 2 3-3 3 0" fill="none" stroke="#3040e0" strokeWidth="1.600" />
    </Box>,
  ],
  [
    "山形",
    <Box>
      <path d="m3 11 4-4 3 2 4-4 7 7M3 18h18M6 18v-3M10 18v-3M14 18v-3M18 18v-3" fill="none" stroke="#e83030" strokeWidth="1.400" />
    </Box>,
  ],
  [
    "震荡",
    <Box>
      <path d="m3 17 2-6 3 3 3-9v12l3-1 2-7 2 5 3-9v6" fill="none" stroke="#e83030" strokeWidth="1.500" />
      <path d="M13 4v14" stroke="#3060e0" />
    </Box>,
  ],
  ["10%", <span className="font-['Liberation_Serif',serif] text-base leading-none text-[#1c44c8]">10%</span>],
  [
    "画笔",
    <svg className="h-6 w-6" viewBox="0 0 24 24">
      <path d="m2 22 2-7L16 3l5 5L9 20z" fill="#f0a030" stroke="#8a5a20" />
      <path d="m16 3 2-2c2 0 5 3 5 5l-2 2z" fill="#e88080" stroke="#905050" strokeWidth=".6" />
      <path d="m2 22 1-4 3 3z" fill="#222" />
      <path d="m6 17 12-12" stroke="#fce08a" />
    </svg>,
  ],
];

const ICONS_C: [string, React.ReactNode][] = [
  ["F5", <BoxLabel t="F5" />],
  [
    "刷新",
    <Box>
      <path d="M5 9c3-6 10-5 12-1l2-1v6h-6l2-2c-2-3-5-3-7-1zM19 14c-3 6-10 5-12 1l-2 1v-6h5l-1 2c2 3 5 3 7 1z" fill="#4cc04c" />
    </Box>,
  ],
];
const LABELS_C = ["1", "5", "15", "30", "60", "日", "周", "月", "N", "多", "季", "年"];

function SideGroup({ items }: { items: [string, React.ReactNode][] }) {
  return (
    <>
      {items.map(([name, icon]) => (
        <button key={name} aria-label={name} className="flex flex-1 items-center justify-center">
          {icon}
        </button>
      ))}
    </>
  );
}

function Sidebar() {
  return (
    <nav className="flex w-9 shrink-0 flex-col border-l border-[#b0b0b0] bg-[#f0f0f0] text-[17px] leading-none text-[#1c3f9c]">
      <div className="-mt-px flex h-[483px] flex-col">
        <SideGroup items={ICONS_A} />
      </div>
      <hr className="mx-1 my-[5px] border-t-2 border-[#a0a0a0]" />
      <div className="flex h-[173px] flex-col">
        <SideGroup items={ICONS_B} />
      </div>
      <hr className="mx-1 my-[5px] border-t-2 border-[#a0a0a0]" />
      <div className="flex h-[483px] flex-col">
        <SideGroup items={ICONS_C} />
        {LABELS_C.map((l) => (
          <button key={l} className="flex-1">
            {l}
          </button>
        ))}
      </div>
    </nav>
  );
}

/* ------------------------------------------------------------------ */
/* Status bar and overlays                                             */
/* ------------------------------------------------------------------ */

const INDICES = [
  ["上证", "3095.57", "30.01", "0.98%", "2679"],
  ["沪深", "3887.85", "44.36", "1.15%", "1520"],
  ["创业", "2359.50", "28.09", "1.20%", "1316"],
];

function StatusBar() {
  return (
    <footer className="flex h-[35px] items-center border-b border-[#223] bg-[#f0f0f0] pt-0.5 text-[21px] font-bold leading-none text-[#ff1010]">
      <svg className="ml-0.5 h-5 w-5" viewBox="0 0 20 20">
        <rect x="1" y="1" width="18" height="18" rx="2" fill="#fdf0b0" stroke="#e09a10" strokeWidth="2" />
        <rect x="6" y="6" width="8" height="8" fill="#f0a020" />
      </svg>
      {INDICES.map(([name, v, chg, pct, amt]) => (
        <div key={name} className="flex w-[411px] items-center whitespace-nowrap pl-[3px]">
          <span className="w-[54px] text-2xl font-light leading-none text-black">{name}</span>
          <span className="w-[102px]">{v}</span>
          <span className="w-[75px]">{chg}</span>
          <span className="w-[86px]">{pct}</span>
          <span className="text-black">
            {amt}
            <span className="text-2xl font-light leading-none">亿</span>
          </span>
        </div>
      ))}
      <div className="ml-[6px] flex h-full items-center gap-2.5 border-l-2 border-[#a8a8a8] pl-0.5 text-black">
        <span className="text-2xl font-light leading-none">总成交</span>
        <span>6</span>
      </div>
    </footer>
  );
}

function ImeBar() {
  const cell = "flex h-full items-center justify-center border border-b-black border-l-white border-r-black border-t-white bg-[#c4c4c4]";
  return (
    <div className="absolute right-[720px] top-[903px] flex h-[26px] w-[158px] border-2 border-b-[#88887c] border-l-[#f4f2e4] border-r-[#88887c] border-t-[#f4f2e4] bg-[#f4f2e4] p-px text-base leading-none text-black">
      <button className={`${cell} w-5 font-['Liberation_Serif',serif] font-bold text-[#900000]`}>A</button>
      <button className={`${cell} w-[72px] whitespace-nowrap`}>极品五笔</button>
      <button aria-label="半角" className={`${cell} w-5`}>
        <svg className="h-3 w-3" viewBox="0 0 12 12">
          <path d="M7 0c6 3 6 10 0 12-3 0-5-1-7-4 6 1 9-3 7-8z" fill="#000" />
        </svg>
      </button>
      <button aria-label="标点" className={`${cell} w-5 font-bold`}>·,</button>
      <button aria-label="软键盘" className={`${cell} flex-1`}>
        <svg className="h-4 w-4" viewBox="0 0 16 16">
          <rect width="16" height="16" fill="#999" />
          <path d="M1 4h14M1 7h14M1 10h14" stroke="#eee" strokeWidth="1.800" strokeDasharray="2 1" />
          <path d="M3 13h10" stroke="#eee" />
        </svg>
      </button>
    </div>
  );
}

function Watermark() {
  return (
    <div className="absolute bottom-0 right-0 flex h-[81px] w-[800px] items-center bg-[#80acdb]">
      <span className="ml-[17px] whitespace-nowrap text-[55px] font-black leading-none text-[#180082]">公式指标网</span>
      <svg className="ml-[30px] h-[78px] w-[78px] shrink-0" viewBox="0 0 78 78">
        <g fill="none" strokeWidth="9">
          <path d="M5 38A34 34 0 0 1 30 6" stroke="#d85a48" />
          <path d="M48 6A34 34 0 0 1 73 38" stroke="#d85a48" />
          <path d="M73 41A34 34 0 0 1 34 73" stroke="#ecd04c" />
        </g>
        <path d="M32 1h14l-3 15h12v22H23V16h12z" fill="#ecd04c" />
        <circle cx="39" cy="7" r="3" fill="#80acdb" />
        <path d="M23 27h9v-2h4M40 32h5v-3h5M32 33v5M46 21v4" fill="none" stroke="#80acdb" strokeWidth="1.500" />
        <path d="M23 40h14v3H23zM41 40h14v3H41zM23 45h14l-3 5H23zM41 45h14v5H44zM23 52h11l-5 15-7-4zM44 52h11v11l-6 4z" fill="#ecd04c" />
        <path id="ring" d="M4 41A36 36 0 0 0 34 75" fill="none" />
        <text fontSize="9" fontWeight="bold" fill="#fff" fontFamily="Liberation Sans">
          <textPath href="#ring">www.9m8.cn</textPath>
        </text>
      </svg>
      <span className="ml-7 font-['Liberation_Serif',serif] text-[65px] font-bold leading-none text-white [-webkit-text-stroke:3px_white]">
        www.9m8.cn
      </span>
    </div>
  );
}

export default function App() {
  return (
    <div className={`relative min-h-screen overflow-hidden bg-black ${SANS}`}>
      <TopBar />
      <div className="flex h-[1324px]">
        <main className="flex min-w-0 flex-1 flex-col border-l border-[#555]">
          <PeriodBar />
          <PriceSection />
          <IndicatorSection />
          <TimeAxis />
          <TabRow tabs={TABS1} colors={{ 指标: "text-[#40ffff]" }} />
          <TabRow tabs={TABS2} colors={{ 综合资讯: YELLOW, 行业资讯: YELLOW, 互动问答: YELLOW }} />
          <div className="border-t border-[#c00000]" />
        </main>
        <QuotePanel />
        <Sidebar />
      </div>
      <StatusBar />
      <ImeBar />
      <Watermark />
    </div>
  );
}
